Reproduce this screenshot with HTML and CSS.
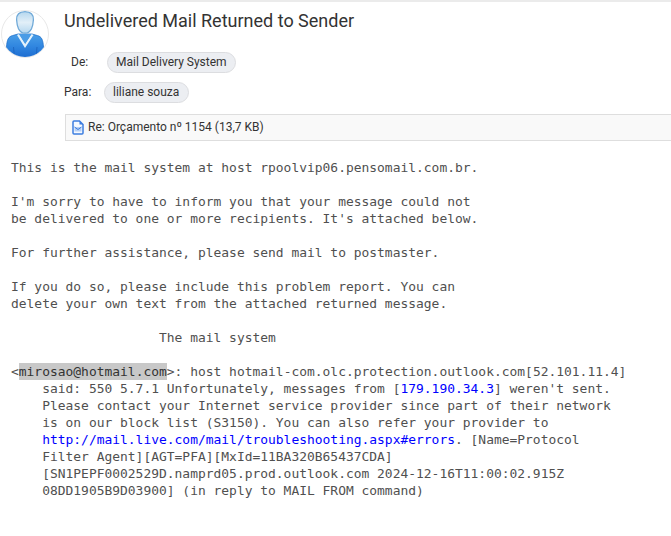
FILE: index.html
```html
<!DOCTYPE html>
<html lang="pt-BR">
<head>
<meta charset="utf-8">
<title>Undelivered Mail Returned to Sender</title>
<link rel="stylesheet" href="styles.css">
</head>
<body>
<header class="mail-header">
  <svg class="avatar" viewBox="0 0 48 48" width="48" height="48" aria-hidden="true">
    <defs>
      <clipPath id="round"><circle cx="24" cy="24" r="23"/></clipPath>
      <linearGradient id="coat" x1="0" y1="0" x2="0" y2="1">
        <stop offset="0" stop-color="#4a9fe8"/><stop offset=".5" stop-color="#3187e0"/><stop offset="1" stop-color="#1c6bd0"/>
      </linearGradient>
      <linearGradient id="face" x1="0" y1="0" x2="0" y2="1">
        <stop offset="0" stop-color="#b5d7ee"/><stop offset=".5" stop-color="#e2eff8"/><stop offset="1" stop-color="#b4d7ef"/>
      </linearGradient>
    </defs>
    <circle cx="24" cy="24" r="23.500" fill="#fff" stroke="#e8e8e8"/>
    <g clip-path="url(#round)">
      <path d="M5.500 48V37C6 29.500 7.500 26.600 11.500 25.600L17 24h14l5.500 1.600C40.500 26.600 42 29.500 42.500 37v11z" fill="url(#coat)" stroke="#2674cc" stroke-width=".8"/>
      <path d="M16 25l8 13 8.500-13-2-1-6.300 9.500L18 24z" fill="#e4f2fc"/>
      <path d="M18 24l6.200 10L30.500 24z" fill="#4a9ce6"/>
      <path d="M12.500 37l1 11M36 37l-1 11" stroke="#1a62bd" stroke-width=".8" fill="none"/>
      <path d="M24 1.700c-5.800 0-8.600 3-8.400 8 .2 3 .5 6 1.900 9 1.500 3 3.800 4.500 6.500 4.500s5-1.500 6.500-4.500c1.400-3 1.700-6 1.900-9 .2-5-2.600-8-8.400-8z" fill="url(#face)" stroke="#6fa9d8" stroke-width="1.300"/>
    </g>
  </svg>
  <div class="details">
    <h1 class="subject">Undelivered Mail Returned to Sender</h1>
    <div class="field from"><span class="label">De:</span><span class="chip">Mail Delivery System</span></div>
    <div class="field to"><span class="label">Para:</span><span class="chip">liliane souza</span></div>
    <div class="attachment">
      <svg class="file-icon" width="12" height="15" viewBox="0 0 12 15" fill="none" aria-hidden="true">
        <path d="M1 2q0-1 1-1h5.500L11 4.500V13q0 1-1 1H2q-1 0-1-1z" fill="#f5f9ff" stroke="#3c7de0" stroke-width="1.500"/>
        <path d="M7.500 1v3.500H11z" fill="#3c7de0"/>
        <path d="M2.500 7h7v4.500h-7z" fill="#b4cff5"/>
        <path d="M2.500 7l3.500 2.500L9.500 7" stroke="#3c7de0"/>
      </svg>
      <span>Re: Orçamento nº 1154 (13,7 KB)</span>
    </div>
  </div>
</header>
<pre class="body">This is the mail system at host rpoolvip06.pensomail.com.br.

I'm sorry to have to inform you that your message could not
be delivered to one or more recipients. It's attached below.

For further assistance, please send mail to postmaster.

If you do so, please include this problem report. You can
delete your own text from the attached returned message.

                   The mail system

&lt;<span class="selected">mirosao@hotmail.com</span>&gt;: host hotmail-com.olc.protection.outlook.com[52.101.11.4]
    said: 550 5.7.1 Unfortunately, messages from [<span class="link">179.190.34.3</span>] weren't sent.
    Please contact your Internet service provider since part of their network
    is on our block list (S3150). You can also refer your provider to
    <span class="link">http://mail.live.com/mail/troubleshooting.aspx#errors</span>. [Name=Protocol
    Filter Agent][AGT=PFA][MxId=11BA320B65437CDA]
    [SN1PEPF0002529D.namprd05.prod.outlook.com 2024-12-16T11:00:02.915Z
    08DD1905B9D03900] (in reply to MAIL FROM command)</pre>
</body>
</html>
```
FILE: styles.css
```css
* { box-sizing: border-box; }
body {
  margin: 0;
  height: 536px;
  overflow: hidden;
  border-top: 2px solid #ebebeb;
  background: #fff;
  color: #333;
  font: 12px/16px Roboto, sans-serif;
}
.mail-header { display: flex; height: 140px; }
.avatar { flex: none; margin: 8px 0 0 1px; }
.details { flex: 1; min-width: 0; padding-left: 15px; }
.subject { margin: 7px 0 0; font-size: 18px; line-height: 24px; font-weight: 400; }
.field { display: flex; align-items: center; height: 21px; }
.from { margin-top: 19px; padding-left: 7px; }
.to { margin-top: 9px; }
.from .label { width: 36px; }
.to .label { width: 40px; }
.label { line-height: 14px; padding-bottom: 1px; }
.chip {
  height: 21px;
  padding: 0 8px;
  border: 1px solid #dcdde0;
  border-radius: 11px;
  background: #eceef2;
  line-height: 19px;
}
.to .chip { padding-right: 9px; }
.attachment {
  display: flex;
  align-items: center;
  gap: 4px;
  height: 27px;
  margin: 11px 0 0 1px;
  padding: 0 0 1px 6px;
  border: 1px solid #dedede;
  border-right: 0;
  background: #f9f9f9;
}
.body {
  margin: 17px 0 0 11px;
  color: #505050;
  font: 12.95px/17px "DejaVu Sans Mono", monospace;
}
.selected { display: inline-block; height: 17px; background: #c8c8c8; color: #333; vertical-align: top; }
.link { color: #00f; }
```
